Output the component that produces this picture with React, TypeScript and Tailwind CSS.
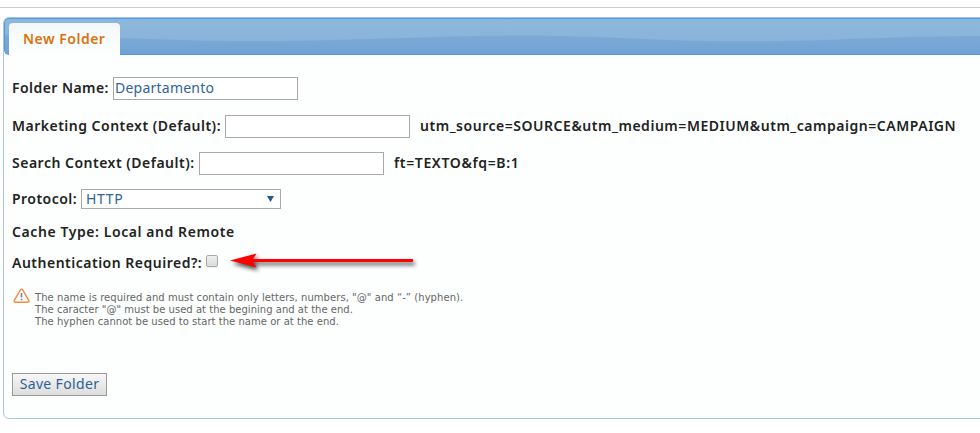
import type { ReactNode } from "react";

function TabBar() {
  return (
    <div className="relative ml-px h-[37px] rounded-l-[5px] border-y border-l border-[#4f97e0] bg-linear-to-b from-[#8db8db] to-[#8ab0da]">
      <svg className="absolute inset-0 h-[35px] w-[975px] rounded-l-[4px]" viewBox="0 0 975 35" preserveAspectRatio="none">
        <defs>
          <linearGradient id="wave" x1="0" y1="0" x2="0" y2="1">
            <stop offset="0" stopColor="#7daad6" />
            <stop offset="1" stopColor="#71a2d4" />
          </linearGradient>
        </defs>
        <path d="M0 16C70 16 150 22 250 22C350 22 430 16.5 515 16.5C600 16.5 650 22.3 740 22.3C830 22.3 880 17 975 17V35H0Z" fill="url(#wave)" />
      </svg>
      <div className="relative ml-1 mt-1 flex h-[32px] w-[111px] items-start rounded-t-[4px] bg-linear-to-b from-[#f4f8fa] to-[#fcfffe] pl-[14px] pt-[6px]">
        <span className="text-[14px] leading-5 font-semibold tracking-[0.5px] whitespace-nowrap text-[#d9730d]">New Folder</span>
      </div>
    </div>
  );
}

function Row({ label, labelClass, height, children }: { label: string; labelClass: string; height: string; children?: ReactNode }) {
  return (
    <div className={`flex items-center ${height}`}>
      <span className={`shrink-0 whitespace-nowrap font-semibold ${labelClass}`}>{label}</span>
      {children}
    </div>
  );
}

const field = "h-[23px] w-[185px] shrink-0 border border-[#a9a9a9] bg-white px-px pb-0.5 text-[14px] leading-5 tracking-[0.23px] text-[#2e6496] outline-none";

export default function App() {
  return (
    <div className="h-[433px] w-[980px] overflow-hidden bg-white pt-[7px] font-['Noto_Sans','Liberation_Sans',sans-serif] text-[14px] text-[#222]">
      <div className="h-px bg-[#cccccc]" />
      <div className="ml-[3px] mt-[9px] h-[402px] w-[990px] rounded-[6px] border border-[#a6c9e2] bg-[#fcfffe]">
        <div className="-ml-px">
          <TabBar />
        </div>
        <form className="flex flex-col items-start pl-2 pt-[22px] leading-5">
          <Row label="Folder Name:" height="h-[23px]" labelClass="-mt-0.5 w-[101px] tracking-[0.44px]">
            <input className={field} defaultValue="Departamento" />
          </Row>
          <div className="mt-[15px]">
            <Row label="Marketing Context (Default):" height="h-[23px]" labelClass="-mt-0.5 w-[213px] tracking-[0.49px]">
              <input className={field} />
              <span className="-mt-0.5 ml-[10px] font-semibold tracking-[0.53px] whitespace-nowrap">utm_source=SOURCE&amp;utm_medium=MEDIUM&amp;utm_campaign=CAMPAIGN</span>
            </Row>
          </div>
          <div className="mt-[14px]">
            <Row label="Search Context (Default):" height="h-[23px]" labelClass="-mt-0.5 w-[187px] tracking-[0.5px]">
              <input className={field} />
              <span className="-mt-0.5 ml-[10px] font-semibold tracking-[0.64px] whitespace-nowrap">ft=TEXTO&amp;fq=B:1</span>
            </Row>
          </div>
          <div className="mt-[14px]">
            <Row label="Protocol:" height="h-5" labelClass="w-[69px] tracking-[0.47px]">
              <button type="button" className="flex h-5 w-[200px] items-center justify-between border border-[#a9a9a9] bg-white pl-1 pr-[6px] text-[#2e6496]">
                <span className="leading-[18px] tracking-[0.65px]">HTTP</span>
                <svg width="7" height="6" viewBox="0 0 7 6"><path d="M0 0h7L3.5 6Z" fill="#235b90" /></svg>
              </button>
            </Row>
          </div>
          <div className="mt-[13px]">
            <Row label="Cache Type: Local and Remote" height="h-5" labelClass="w-[240px] tracking-[0.58px]" />
          </div>
          <div className="mt-[11px]">
            <Row label="Authentication Required?:" height="h-5" labelClass="w-[194px] tracking-[0.5px]">
              <input type="checkbox" className="-mt-[5px] h-[12px] w-[12px] appearance-none rounded-[2px] border border-[#a8a8a8] bg-linear-to-b from-[#eeeeee] to-[#dcdcdc] shadow-[0_1px_0_#0000000d]" />
              <svg className="-mt-1.5 ml-[7px] overflow-visible" width="200" height="24" viewBox="0 0 200 24">
                <path d="M5 12.5 31.500 5.500 28 11H187.500Q189 12.500 187.500 14H28L31.500 19.500Z" fill="#ff0000" className="drop-shadow-[2px_3px_2px_rgba(0,0,0,0.7)]" />
              </svg>
            </Row>
          </div>
          <div className="mt-[15px] flex font-['DejaVu_Sans',sans-serif] text-[10px] leading-3 text-[#666]">
            <svg className="ml-px shrink-0" width="17" height="16" viewBox="0 0 17 16" fill="none">
              <path d="M8.500 1.200Q9.300 1.200 9.800 2.100L15.600 12.100Q16.700 14.200 14.500 14.300H2.500Q.3 14.200 1.400 12.100L7.200 2.100Q7.700 1.200 8.500 1.200Z" fill="#fffaf5" stroke="#f28b43" strokeWidth="1.400" />
              <path d="M8.500 5v4.500M8.500 10.800v1.500" stroke="#5590c8" strokeWidth="1.600" />
            </svg>
            <p className="ml-[5px] mt-[4px] whitespace-nowrap">
              <span className="tracking-[0.055px]">The name is required and must contain only letters, numbers, "@" and “-” (hyphen).</span>
              <br />
              <span className="tracking-[0.025px]">The caracter "@" must be used at the begining and at the end.</span>
              <br />
              <span className="tracking-[0.035px]">The hyphen cannot be used to start the name or at the end.</span>
            </p>
          </div>
          <button type="button" className="mt-[45px] h-[23px] w-[95px] border border-[#999999] bg-linear-to-b from-[#f7f7f7] to-[#dddddd] pb-0.5 text-[14px] leading-5 tracking-[0.35px] whitespace-nowrap text-[#2e5f91]">
            Save Folder
          </button>
        </form>
      </div>
    </div>
  );
}
